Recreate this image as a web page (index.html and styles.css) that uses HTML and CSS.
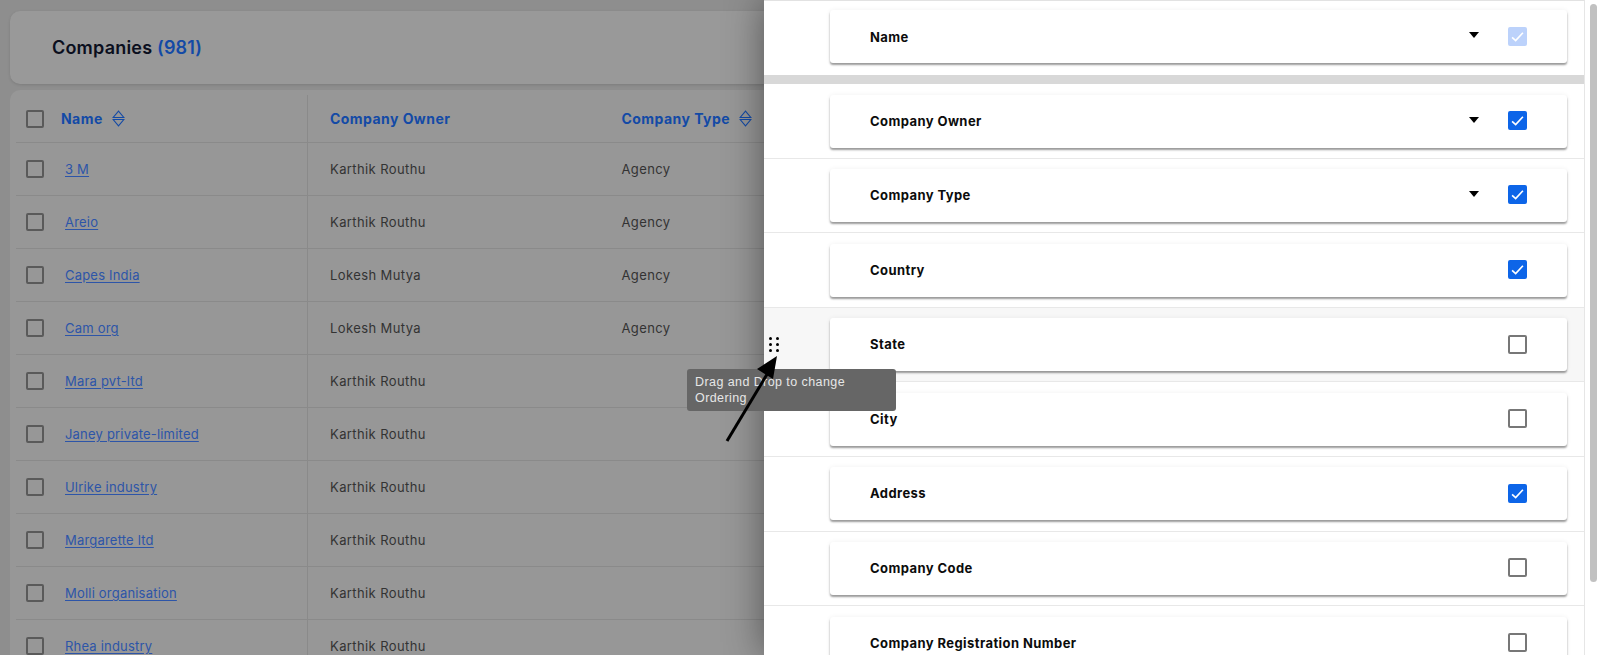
FILE: index.html
```html
<!DOCTYPE html>
<html lang="en">
<head>
<meta charset="utf-8">
<title>Companies</title>
<link rel="stylesheet" href="styles.css">
</head>
<body>
<div class="page">
  <main class="list">
    <header class="list-head"><h1>Companies <span class="count">(981)</span></h1></header>
    <section class="table">
      <div class="tr th">
        <div class="c1"><i class="box"></i><span>Name</span><svg class="sort" viewBox="0 0 12 16"><path d="M6 1 1 7h10zM1 9h10L6 15z"/></svg></div>
        <div class="c2"><span>Company Owner</span></div>
        <div class="c3"><span>Company Type</span><svg class="sort" viewBox="0 0 12 16"><path d="M6 1 1 7h10zM1 9h10L6 15z"/></svg></div>
      </div>
      <div class="tr"><div class="c1"><i class="box"></i><a>3 M</a></div><div class="c2">Karthik Routhu</div><div class="c3">Agency</div></div>
      <div class="tr"><div class="c1"><i class="box"></i><a>Areio</a></div><div class="c2">Karthik Routhu</div><div class="c3">Agency</div></div>
      <div class="tr"><div class="c1"><i class="box"></i><a>Capes India</a></div><div class="c2">Lokesh Mutya</div><div class="c3">Agency</div></div>
      <div class="tr"><div class="c1"><i class="box"></i><a>Cam org</a></div><div class="c2">Lokesh Mutya</div><div class="c3">Agency</div></div>
      <div class="tr"><div class="c1"><i class="box"></i><a>Mara pvt-ltd</a></div><div class="c2">Karthik Routhu</div><div class="c3"></div></div>
      <div class="tr"><div class="c1"><i class="box"></i><a>Janey private-limited</a></div><div class="c2">Karthik Routhu</div><div class="c3"></div></div>
      <div class="tr"><div class="c1"><i class="box"></i><a>Ulrike industry</a></div><div class="c2">Karthik Routhu</div><div class="c3"></div></div>
      <div class="tr"><div class="c1"><i class="box"></i><a>Margarette ltd</a></div><div class="c2">Karthik Routhu</div><div class="c3"></div></div>
      <div class="tr"><div class="c1"><i class="box"></i><a>Molli organisation</a></div><div class="c2">Karthik Routhu</div><div class="c3"></div></div>
      <div class="tr"><div class="c1"><i class="box"></i><a>Rhea industry</a></div><div class="c2">Karthik Routhu</div><div class="c3"></div></div>
    </section>
  </main>

  <aside class="drawer">
    <div class="fields">
      <div class="frow frow-first"><div class="card"><b>Name</b><i class="caret"></i><span class="cb cb-locked"><svg viewBox="0 0 18 18"><path d="M2.5 10 6.8 14 15.5 4.5"/></svg></span></div></div>
      <div class="band"></div>
      <div class="frow"><div class="card"><b>Company Owner</b><i class="caret"></i><span class="cb cb-on"><svg viewBox="0 0 18 18"><path d="M2.5 10 6.8 14 15.5 4.5"/></svg></span></div></div>
      <div class="frow"><div class="card"><b>Company Type</b><i class="caret"></i><span class="cb cb-on"><svg viewBox="0 0 18 18"><path d="M2.5 10 6.8 14 15.5 4.5"/></svg></span></div></div>
      <div class="frow"><div class="card"><b>Country</b><span class="cb cb-on"><svg viewBox="0 0 18 18"><path d="M2.5 10 6.8 14 15.5 4.5"/></svg></span></div></div>
      <div class="frow frow-hover"><div class="card"><b>State</b><span class="cb"></span></div></div>
      <div class="frow"><div class="card"><b>City</b><span class="cb"></span></div></div>
      <div class="frow"><div class="card"><b>Address</b><span class="cb cb-on"><svg viewBox="0 0 18 18"><path d="M2.5 10 6.8 14 15.5 4.5"/></svg></span></div></div>
      <div class="frow"><div class="card"><b>Company Code</b><span class="cb"></span></div></div>
      <div class="frow"><div class="card"><b>Company Registration Number</b><span class="cb"></span></div></div>
    </div>
    <div class="scrollbar"><div class="thumb"></div></div>
  </aside>

  <div class="grip"><i></i><i></i><i></i><i></i><i></i><i></i></div>
  <div class="tooltip">Drag and Drop to change Ordering</div>
  <svg class="pointer" viewBox="0 0 70 100"><path class="shaft" d="M4 90 46 20"/><path class="head" d="M54 5 34 18 50 28z"/></svg>
</div>
</body>
</html>
```
FILE: styles.css
```css
* { box-sizing: border-box; }
html, body { margin: 0; height: 100%; overflow: hidden; }
body { font-family: Inter, "Liberation Sans", sans-serif; background: #8e8e8e; }
.page { position: relative; width: 1600px; height: 655px; overflow: hidden; }

.list { padding: 11px 0 0 10px; width: 800px; }
.list-head { height: 73px; background: #999; border-radius: 10px 0 0 10px; display: flex; align-items: center; padding-left: 42px; box-shadow: 0 1px 3px rgba(0,0,0,.12); }
.list-head h1 { margin: 0; font-size: 18px; font-weight: 600; color: #0b0f1e; letter-spacing: .2px; }
.count { color: #134aa6; }

.table { margin-top: 6px; background: #979797; border-radius: 10px 0 0 0; padding-left: 6px; height: 600px; }
.tr { display: grid; grid-template-columns: 292px 292px 1fr; height: 53px; border-bottom: 1px solid #8a8a8a; font-size: 13px; color: #333; letter-spacing: .4px; }
.tr > div { display: flex; align-items: center; }
.th { height: 53px; padding-top: 5px; font-size: 14px; font-weight: 700; color: #134aa6; letter-spacing: .45px; }
.c1 { padding-left: 10px; border-right: 1px solid #8a8a8a; }
.c2 { padding-left: 22px; }
.c3 { padding-left: 21.5px; }
.box { width: 18px; height: 18px; flex: none; border: 2px solid #5a5a5a; border-radius: 2px; }
.th .box + span { margin-left: 17px; }
.c1 a { margin-left: 21px; color: #2d55a8; text-decoration: underline; text-underline-offset: 2px; letter-spacing: .2px; }
.sort { width: 13px; height: 17px; margin-left: 9px; fill: none; stroke: #134aa6; stroke-width: 1; }

.drawer { position: absolute; top: 0; right: 0; bottom: 0; width: 836px; background: #fff; display: flex; box-shadow: 0 0 36px rgba(0,0,0,.45); }
.fields { flex: none; width: 821px; border-right: 1px solid #e6e6e6; border-top: 1px solid #e2e2e2; }
.frow { height: 74.6px; padding: 10.5px 17px 0 65.5px; border-bottom: 1px solid #e8e8e8; }
.frow-first { height: 74px; padding-top: 9px; border-bottom: 0; }
.frow-hover { background: #f7f7f7; }
.band { height: 9px; background: #d8d8d8; }
.card { height: 53px; display: flex; align-items: center; padding: 0 0 1px 40.5px; background: #fff; border-radius: 3px; box-shadow: 0 2px 2px rgba(0,0,0,.38), 0 0 5px rgba(0,0,0,.06); position: relative; }
.frow-first .card { padding-bottom: 0; }
.card b { font-size: 13px; font-weight: 700; color: #0c0c0c; letter-spacing: .42px; }
.caret { position: absolute; left: 639px; top: 22px; width: 0; height: 0; border-left: 5px solid transparent; border-right: 5px solid transparent; border-top: 6px solid #000; }
.cb { position: absolute; right: 40px; top: 16.4px; width: 19px; height: 19px; border: 2px solid #777; border-radius: 2px; background: #fff; }
.frow-first .cb { top: 17px; }
.cb svg { display: block; width: 100%; height: 100%; fill: none; stroke: #fff; stroke-width: 2; }
.cb-on { background: #0d65e8; border-color: #0d65e8; }
.cb-locked { background: #bcd2fb; border-color: #bcd2fb; }

.scrollbar { flex: 1; padding: 4px 3px 0 5px; }
.thumb { height: 578px; background: #c1c1c1; border-radius: 5px; }

.grip { position: absolute; left: 769px; top: 337px; width: 11px; display: grid; grid-template-columns: 3px 3px; column-gap: 4px; row-gap: 3px; }
.grip i { width: 3px; height: 3px; background: #000; border-radius: 50%; }
.tooltip { position: absolute; left: 687px; top: 369px; width: 209px; height: 42px; padding: 5px 8px; background: #666; border-radius: 3px; color: #e6e6e6; font: 12.5px/16px "Liberation Sans", Arial, sans-serif; letter-spacing: .42px; }
.pointer { position: absolute; left: 723px; top: 351px; width: 70px; height: 100px; }
.shaft { stroke: #000; stroke-width: 3; fill: none; }
.head { fill: #000; }
```
